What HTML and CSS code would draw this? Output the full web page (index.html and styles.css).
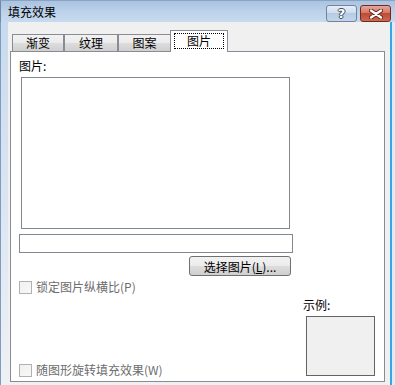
FILE: index.html
```html
<!DOCTYPE html>
<html lang="zh">
<head>
  <meta charset="UTF-8">
  <title>填充效果</title>
  <link rel="stylesheet" href="styles.css">
</head>
<body>
  <div class="window">
    <div class="titlebar">
      <span class="title">填充效果</span>
      <div class="caption-btns">
        <button class="cap-btn help">?</button>
        <button class="cap-btn close">
          <svg width="14" height="10" viewBox="0 0 14 10">
            <path d="M2 1.5 L12 8.5 M12 1.5 L2 8.5" stroke="#5a2418" stroke-width="4.2" stroke-linecap="round"/>
            <path d="M2 1.5 L12 8.5 M12 1.5 L2 8.5" stroke="#ffffff" stroke-width="2.4" stroke-linecap="round"/>
          </svg>
        </button>
      </div>
    </div>
    <div class="frame">
      <div class="edge-left"></div>
      <div class="client">
        <div class="tabs">
          <div class="tab t1">渐变</div>
          <div class="tab t2">纹理</div>
          <div class="tab t3">图案</div>
          <div class="tab active"><span class="focus">图片</span></div>
        </div>
        <div class="panel">
          <div class="label pic-label">图片:</div>
          <div class="picbox"></div>
          <div class="path-input"></div>
          <button class="pick-btn">选择图片(<u>L</u>)...</button>
          <label class="check first"><span class="box"></span>锁定图片纵横比(P)</label>
          <div class="lower">
            <label class="check"><span class="box"></span>随图形旋转填充效果(W)</label>
            <div class="sample">
              <div class="label">示例:</div>
              <div class="sample-box"></div>
            </div>
          </div>
        </div>
      </div>
      <div class="edge-right"></div>
    </div>
  </div>
</body>
</html>
```
FILE: styles.css
```css
body {
  margin: 0;
  background: #f0f0f0;
  font-family: "Noto Sans CJK SC", "DejaVu Sans", sans-serif;
  font-size: 12px;
  color: #000;
}
.window {
  width: 395px;
  height: 385px;
  display: flex;
  flex-direction: column;
  overflow: hidden;
}
.titlebar {
  height: 22px;
  display: flex;
  justify-content: space-between;
  background: linear-gradient(to bottom, #a9c3e1, #bcd2ea 50%, #c7daee);
  border-left: 1px solid #6f89a8;
  border-top: 1px solid #8aa3c1;
  box-sizing: border-box;
}
.title {
  padding: 3px 0 0 7px;
  font-size: 12px;
  line-height: 16px;
}
.caption-btns {
  display: flex;
  padding-top: 4px;
  gap: 3px;
  padding-right: 4px;
}
.cap-btn {
  width: 31px;
  height: 17px;
  border-radius: 3px;
  padding: 0;
  display: flex;
  align-items: center;
  justify-content: center;
}
.help {
  border: 1px solid #71839d;
  background: linear-gradient(to bottom, #e6eef8, #cfddef 45%, #b5cbe5 50%, #c2d5ec);
  color: #fff;
  font: bold 13px "DejaVu Sans", sans-serif;
  text-shadow: 1px 0 #404a5a, -1px 0 #404a5a, 0 1px #404a5a, 0 -1px #404a5a;
}
.close {
  border: 1px solid #6e2a1f;
  background: linear-gradient(to bottom, #e9a69a, #d47866 45%, #c04a34 50%, #cb6a52);
}
.frame {
  flex: 1;
  display: flex;
}
.edge-left {
  width: 7px;
  border-left: 1px solid #7f9bbd;
  background: linear-gradient(to bottom, #c8daee, #dfe8f3 60%, #eef1f5);
}
.edge-right {
  width: 3px;
  border-left: 2px solid #36a7e6;
  background: #e0eaf5;
}
.client {
  flex: 1;
  padding-top: 9px;
}
.tabs {
  display: flex;
  align-items: flex-end;
  height: 20px;
  padding-left: 4px;
}
.tab {
  height: 17px;
  box-sizing: border-box;
  border: 1px solid #898c95;
  border-bottom: none;
  background: linear-gradient(to bottom, #f2f2f2, #ebebeb 50%, #dddddd 51%, #cfcfcf);
  text-align: center;
  line-height: 16px;
}
.t1 { width: 52px; }
.t2 { width: 54px; margin-left: 0; }
.t3 { width: 53px; margin-left: 0; }
.tab.active {
  width: 58px;
  height: 22px;
  margin-bottom: -1px;
  margin-left: -1px;
  background: #fff;
  position: relative;
  z-index: 1;
  padding-top: 3px;
  line-height: 14px;
}
.focus {
  display: inline-block;
  padding: 0 12px;
  outline: 1px dotted #000;
  line-height: 14px;
}
.panel {
  margin-left: 2px;
  width: 373px;
  height: 329px;
  background: #fff;
  border: 1px solid #898c95;
}
.label {
  line-height: 14px;
}
.pic-label {
  margin: 7px 0 0 8px;
}
.picbox {
  margin: 4px 0 0 10px;
  width: 267px;
  height: 150px;
  border: 1px solid #828790;
}
.path-input {
  margin: 5px 0 0 8px;
  width: 272px;
  height: 17px;
  border: 1px solid #828790;
}
.pick-btn {
  display: block;
  margin: 3px 0 0 178px;
  width: 102px;
  height: 20px;
  border: 1px solid #707070;
  border-radius: 3px;
  background: linear-gradient(to bottom, #f2f2f2, #ebebeb 50%, #dddddd 51%, #cfcfcf);
  font-family: "Noto Sans CJK SC", "DejaVu Sans", sans-serif;
  font-size: 12px;
  padding: 0;
  color: #000;
}
.check {
  display: flex;
  align-items: center;
  gap: 4px;
  color: #6d6d6d;
  line-height: 14px;
}
.check.first {
  margin: 4px 0 0 8px;
}
.box {
  width: 11px;
  height: 11px;
  border: 1px solid #b1b1b1;
  background: linear-gradient(135deg, #f0f0f0, #f8f8f8);
}
.lower {
  display: flex;
  justify-content: space-between;
  align-items: flex-end;
  margin: 4px 9px 0 8px;
}
.lower .check {
  margin-bottom: -1px;
}
.sample-box {
  margin: 4px 0 0 3px;
  width: 67px;
  height: 58px;
  border: 1px solid #646464;
  background: #f0f0f0;
}
```
